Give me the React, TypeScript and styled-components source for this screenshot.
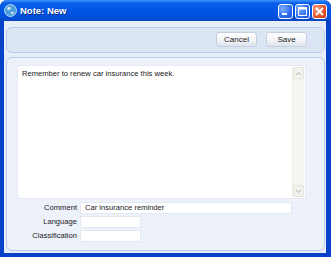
import { createGlobalStyle, styled } from "styled-components";

const GlobalStyle = createGlobalStyle`
  html, body {
    margin: 0;
    padding: 0;
    background: #ffffff;
  }
  * {
    box-sizing: border-box;
  }
`;

const Window = styled.div`
  width: 331px;
  height: 257px;
  display: flex;
  flex-direction: column;
  background: #0842c8;
  border-radius: 7px 7px 0 0;
  overflow: hidden;
  font-family: "Liberation Sans", Arial, sans-serif;
`;

const TitleBar = styled.div`
  height: 21px;
  flex: none;
  display: flex;
  align-items: center;
  padding: 0 4px 0 4px;
  background: linear-gradient(
    to bottom,
    #3d95ff 0%,
    #0a5fe9 15%,
    #0055e5 50%,
    #0050d8 85%,
    #0a44c0 100%
  );
`;

const TitleText = styled.span`
  flex: 1;
  margin-left: 3px;
  color: #ffffff;
  font-size: 9.5px;
  font-weight: bold;
  text-shadow: 1px 1px 0 #0a2c8a;
`;

const Caption = styled.div`
  display: flex;
  gap: 2px;
  margin-top: 1px;
`;

const CapButton = styled.div<{ $close?: boolean }>`
  width: 15px;
  height: 15px;
  border: 1px solid #ffffff;
  border-radius: 3px;
  display: flex;
  align-items: center;
  justify-content: center;
  background: ${(p) =>
    p.$close
      ? "radial-gradient(circle at 30% 30%, #f7a88a, #e0512a 60%, #c83512)"
      : "radial-gradient(circle at 30% 30%, #7fb0ff, #2a6af0 60%, #1d52d8)"};
`;

const Body = styled.div`
  flex: 1;
  display: flex;
  flex-direction: column;
  gap: 4px;
  margin: 0 5px 4px 4px;
  padding: 6px 1px 2px 2px;
  background: #e8eef9;
`;

const Panel = styled.div<{ $grow?: boolean }>`
  border: 1px solid #b9cbe9;
  border-radius: 6px;
  background: ${(p) => (p.$grow ? "#edf1fa" : "#dce5f5")};
  ${(p) => (p.$grow ? "flex: 1;" : "height: 26px;")}
`;

const Toolbar = styled(Panel)`
  display: flex;
  align-items: center;
  justify-content: flex-end;
  gap: 9px;
  padding: 0 17px 1px 0;
`;

const Button = styled.button`
  width: 41px;
  height: 15px;
  padding: 0;
  border: 1px solid #c4cfe0;
  border-radius: 3px;
  background: linear-gradient(to bottom, #ffffff, #f1f3f7 60%, #dde3ec);
  color: #1c1c1c;
  font-family: "Liberation Sans", Arial, sans-serif;
  font-size: 8px;
`;

const Main = styled(Panel)`
  display: flex;
  flex-direction: column;
  padding: 7px 18px 0 10px;
`;

const NoteArea = styled.div`
  height: 134px;
  display: flex;
  background: #ffffff;
  border: 1px solid #e6ebf3;
`;

const NoteText = styled.div`
  flex: 1;
  padding: 3px 0 0 4px;
  font-size: 7.6px;
  color: #1a1a1a;
`;

const Scrollbar = styled.div`
  width: 12px;
  margin: 1px 1px 1px 0;
  display: flex;
  flex-direction: column;
  justify-content: space-between;
  background: #f6f5f1;
  border-left: 1px solid #f0efea;
`;

const ScrollArrow = styled.div`
  height: 12px;
  display: flex;
  align-items: center;
  justify-content: center;
  background: #f3f3ee;
  border: 1px solid #e4e4dc;
  border-radius: 2px;
`;

const Fields = styled.div`
  display: grid;
  grid-template-columns: 60px auto;
  column-gap: 3px;
  row-gap: 2px;
  margin-top: 3px;
`;

const Label = styled.span`
  text-align: right;
  font-size: 7.6px;
  color: #222222;
  line-height: 12px;
`;

const Field = styled.div<{ $wide?: boolean }>`
  width: ${(p) => (p.$wide ? "212px" : "61px")};
  height: 12px;
  padding-left: 4px;
  background: #ffffff;
  border: 1px solid #e4e9f1;
  font-size: 7.6px;
  line-height: 10px;
  color: #1a1a1a;
`;

const Arrow = ({ up }: { up?: boolean }) => (
  <svg width="7" height="5" viewBox="0 0 7 5">
    <path
      d={up ? "M1 4 L3.5 1.5 L6 4" : "M1 1 L3.5 3.5 L6 1"}
      fill="none"
      stroke="#c8c8bf"
      strokeWidth="1.2"
    />
  </svg>
);

const Globe = () => (
  <svg width="13" height="13" viewBox="0 0 13 13">
    <circle cx="6.5" cy="6.5" r="6" fill="#4f9fd8" stroke="#d8ecff" strokeWidth="0.8" />
    <path d="M3 4 Q5 2 7 4 Q6 6 4 6 Z" fill="#ffffff" opacity="0.85" />
    <path d="M7 8 Q9 7 10 9 Q8 11 7 10 Z" fill="#ffffff" opacity="0.7" />
  </svg>
);

export default function App() {
  return (
    <>
      <GlobalStyle />
      <Window>
        <TitleBar>
          <Globe />
          <TitleText>Note: New</TitleText>
          <Caption>
            <CapButton>
              <svg width="9" height="9" viewBox="0 0 9 9">
                <rect x="1" y="6" width="5" height="2" fill="#ffffff" />
              </svg>
            </CapButton>
            <CapButton>
              <svg width="9" height="9" viewBox="0 0 9 9">
                <rect x="0.5" y="0.5" width="8" height="8" fill="none" stroke="#ffffff" />
                <rect x="0.5" y="0.5" width="8" height="2" fill="#ffffff" />
              </svg>
            </CapButton>
            <CapButton $close>
              <svg width="9" height="9" viewBox="0 0 9 9">
                <path d="M1 1 L8 8 M8 1 L1 8" stroke="#ffffff" strokeWidth="1.8" />
              </svg>
            </CapButton>
          </Caption>
        </TitleBar>
        <Body>
          <Toolbar>
            <Button>Cancel</Button>
            <Button>Save</Button>
          </Toolbar>
          <Main $grow>
            <NoteArea>
              <NoteText>Remember to renew car insurance this week.</NoteText>
              <Scrollbar>
                <ScrollArrow>
                  <Arrow up />
                </ScrollArrow>
                <ScrollArrow>
                  <Arrow />
                </ScrollArrow>
              </Scrollbar>
            </NoteArea>
            <Fields>
              <Label>Comment</Label>
              <Field $wide>Car insurance reminder</Field>
              <Label>Language</Label>
              <Field />
              <Label>Classification</Label>
              <Field />
            </Fields>
          </Main>
        </Body>
      </Window>
    </>
  );
}
